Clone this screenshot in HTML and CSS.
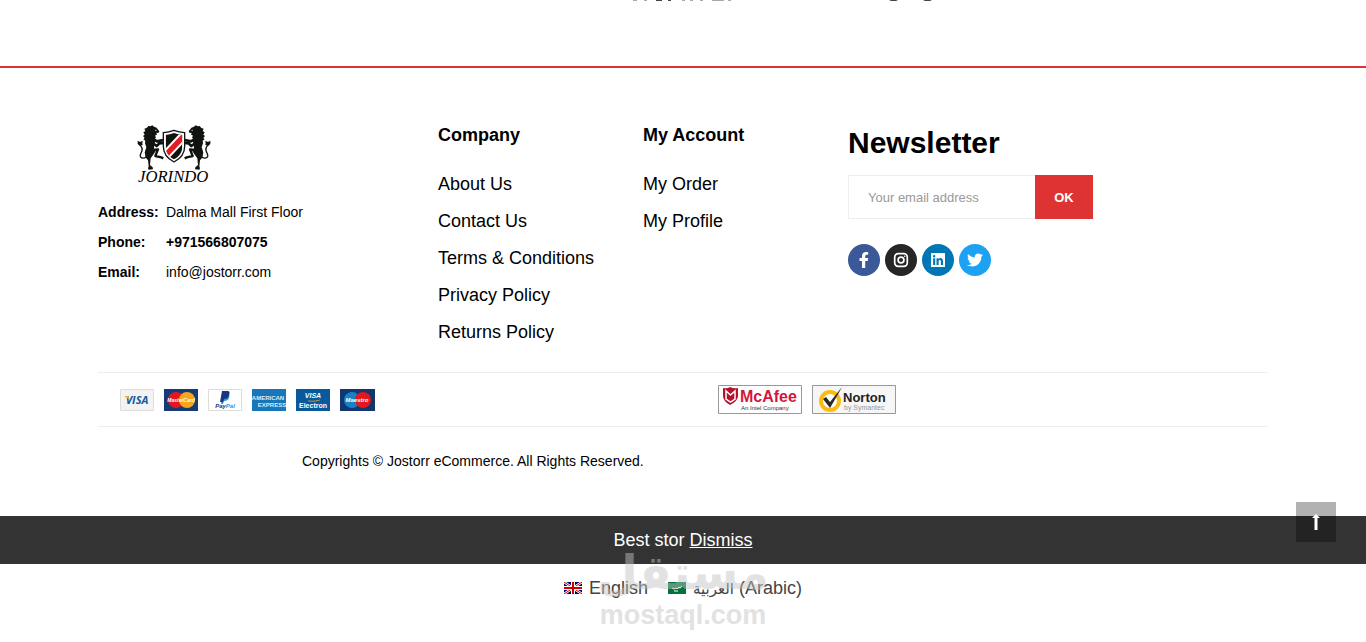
FILE: index.html
```html
<!DOCTYPE html>
<html lang="en">
<head>
    <meta charset="UTF-8">
    <meta name="viewport" content="width=device-width, initial-scale=1.0">
    <title>Jostorr</title>
    <link rel="stylesheet" href="styles.css">
</head>
<body>
    <section class="brands">
        <svg class="brand-one" width="100" height="2" viewBox="0 0 100 2" aria-hidden="true">
            <path fill="#aaa" d="M0 0h4v1H0zM11 0h3v1h-3zM49 0h3v1h-3zM57 0h3v1h-3zM67 0h3v1h-3zM79 0h12v1H79zM95 0h3v1h-3z"/>
            <path fill="#444" d="M23 0h6v1h-6zM35 0h3v1h-3z"/>
        </svg>
        <svg class="brand-two" width="44" height="2" viewBox="0 0 44 2" aria-hidden="true">
            <path fill="#444" d="M0 0h9l-2 1H2zM34 0h9l-2 1h-5z"/>
        </svg>
    </section>

    <footer class="footer">
        <div class="container">
            <div class="footer-top">
                <div class="footer-about">
                    <a href="#" class="logo" aria-label="Jorindo">
                        <svg width="76" height="62" viewBox="0 0 228 186">
                            <defs>
                                <g id="lion">
                                    <!-- mane, head and body -->
                                    <path fill="#11130e" d="M34 6l6 1 6-3 5 4 8 3 3 5 5 5-2 5-8 1 4 4-7 4 3 5-4 5 2 7-3 7-1 14-4 12-2 10-8 8-10-5-4-12 5-16-4-12 1-8-6-4 4-4-5-6 5-4-4-7 6-4-3-7 7-2z"/>
                                    <!-- fore legs -->
                                    <path fill="none" stroke="#11130e" stroke-width="8" stroke-linejoin="round" d="M44 42l16 10 18-4M45 56l14 10 8-8 12-1"/>
                                    <!-- hind legs -->
                                    <path fill="#11130e" d="M26 78l18-4 12 8-10 14-5 7-2 20 8 7 1 6-13 1-2-4 2-6-2-18-8-9z"/>
                                    <path fill="none" stroke="#11130e" stroke-width="7" stroke-linejoin="round" d="M46 78l17-2-8 20 18 4 6 3"/>
                                    <!-- tail -->
                                    <path fill="none" stroke="#11130e" stroke-width="4" d="M29 99c-16 8-23 0-17-12 5-9 5-12 2-17-3-6-8-6-8-13"/>
                                    <path fill="#11130e" d="M2 50l7 4 8-4-1 8 1 5-8 2-7-5z"/>
                                    <path fill="#fff" d="M54 17l6 2-4 2z"/>
                                </g>
                            </defs>
                            <use href="#lion"/>
                            <use href="#lion" transform="matrix(-1 0 0 1 222 0)"/>
                            <path fill="#fff" stroke="#11130e" stroke-width="4" d="M79 26q17-1 32-7 15 6 32 7v41c0 24-12 37-32 47-20-10-32-23-32-47z"/>
                            <clipPath id="shield"><path d="M86 33q13-1 25-6 12 5 25 6v33c0 20-9 31-25 40-16-9-25-20-25-40z"/></clipPath>
                            <g clip-path="url(#shield)">
                                <path fill="#11130e" d="M80 20h64v90H80z"/>
                                <path stroke="#fff" stroke-width="28" d="M75 105l72-76"/>
                                <path stroke="#e31b23" stroke-width="16" d="M75 105l72-76"/>
                            </g>
                            <text x="3" y="175" class="logo-text">JORINDO</text>
                        </svg>
                    </a>
                    <dl class="contact">
                        <dt>Address:</dt>
                        <dd>Dalma Mall First Floor</dd>
                        <dt>Phone:</dt>
                        <dd class="phone">+971566807075</dd>
                        <dt>Email:</dt>
                        <dd>info@jostorr.com</dd>
                    </dl>
                </div>

                <div class="footer-links">
                    <h3>Company</h3>
                    <ul>
                        <li><a href="#">About Us</a></li>
                        <li><a href="#">Contact Us</a></li>
                        <li><a href="#">Terms &amp; Conditions</a></li>
                        <li><a href="#">Privacy Policy</a></li>
                        <li><a href="#">Returns Policy</a></li>
                    </ul>
                </div>

                <div class="footer-links">
                    <h3>My Account</h3>
                    <ul>
                        <li><a href="#">My Order</a></li>
                        <li><a href="#">My Profile</a></li>
                    </ul>
                </div>

                <div class="newsletter">
                    <h2>Newsletter</h2>
                    <form class="newsletter-form">
                        <input type="email" aria-label="Your email address" placeholder="Your email address">
                        <button type="submit">OK</button>
                    </form>
                    <div class="social">
                        <a href="#" class="facebook" aria-label="Facebook">
                            <svg width="16" height="16" viewBox="0 0 16 16"><path fill="#fff" d="M6 16V9H3.500V6H6V4.200C6 1.500 7.500 0 10 0c1 0 2.200.2 2.200.2v2.500H11C9.600 2.700 9.200 3.500 9.200 4.400V6h3l-.5 3H9.200v7z"/></svg>
                        </a>
                        <a href="#" class="instagram" aria-label="Instagram">
                            <svg width="16" height="16" viewBox="0 0 16 16" fill="none" stroke="#fff"><rect x="1.700" y="1.700" width="12.600" height="12.600" rx="3.500" stroke-width="1.700"/><circle cx="8" cy="8" r="2.900" stroke-width="1.700"/><circle cx="11.700" cy="4.300" r=".8" fill="#fff" stroke="none"/></svg>
                        </a>
                        <a href="#" class="linkedin" aria-label="LinkedIn">
                            <svg width="16" height="16" viewBox="0 0 16 16"><path fill="#fff" fill-rule="evenodd" d="M1.500 1h13q.5 0 .5.500v13q0 .5-.5.500h-13q-.5 0-.5-.5v-13Q1 1 1.500 1zM3.100 6.300V13h2.100V6.300zM4.150 3a1.200 1.200 0 1 0 0 2.400 1.200 1.200 0 0 0 0-2.400zM6.500 6.300V13h2.100V9.700c0-2.200 2.300-2.200 2.300 0V13H13V9.200c0-3.500-3.300-3.800-4.500-2V6.300z"/></svg>
                        </a>
                        <a href="#" class="twitter" aria-label="Twitter">
                            <svg width="16" height="16" viewBox="0 0 512 512"><path fill="#fff" d="M459 152c0 4 .3 9 .3 14 0 138-105 298-298 298-59 0-114-17-161-47 8 1 16 1 25 1 49 0 94-16 130-45-46-1-85-31-98-73 7 1 13 2 20 2 9 0 19-1 28-4-48-10-84-52-84-103v-1c14 8 30 13 47 13-28-19-47-51-47-87 0-19 5-37 14-53 52 64 129 105 216 110-2-8-3-16-3-24 0-58 47-105 105-105 30 0 57 13 77 33 24-5 46-13 66-25-8 24-24 45-46 58 21-2 42-8 60-16-14 21-32 39-52 54z"/></svg>
                        </a>
                    </div>
                </div>
            </div>

            <div class="footer-middle">
                <div class="payments">
                    <svg width="34" height="22" viewBox="0 0 34 22" role="img" aria-label="Visa">
                        <path fill="#f3f3f3" stroke="#ddd" d="M.5.5h33v21H.5z"/>
                        <text x="17" y="15" class="card-text visa" fill="#12589c">VISA</text>
                        <path fill="#f5a623" d="M4 7h4l2 4z"/>
                    </svg>
                    <svg width="34" height="22" viewBox="0 0 34 22" role="img" aria-label="MasterCard">
                        <path fill="#163c78" d="M0 0h34v22H0z"/>
                        <circle cx="12" cy="11" r="8" fill="#e3171e"/>
                        <circle cx="23" cy="11" r="8" fill="#f9a51a"/>
                        <text x="17" y="13" class="card-text master" fill="#fff">MasterCard</text>
                    </svg>
                    <svg width="34" height="22" viewBox="0 0 34 22" role="img" aria-label="PayPal">
                        <path fill="#fff" stroke="#ddd" d="M.5.5h33v21H.5z"/>
                        <path fill="#2997d8" d="M15 5h6q1 1 0 4-1 3-5 3l-1 3h-2z"/>
                        <path fill="#173780" d="M14 2h5c3 0 3 2 2 4-1 3-2 4-5 4l-1 3h-3z"/>
                        <text x="17" y="19" class="card-text paypal" fill="#173780">Pay<tspan fill="#2997d8">Pal</tspan></text>
                    </svg>
                    <svg width="34" height="22" viewBox="0 0 34 22" role="img" aria-label="American Express">
                        <path fill="#1976b9" d="M0 0h34v22H0z"/>
                        <text x="16" y="11" class="card-text amex">AMERICAN</text>
                        <text x="20" y="18" class="card-text amex">EXPRESS</text>
                    </svg>
                    <svg width="34" height="22" viewBox="0 0 34 22" role="img" aria-label="Visa Electron">
                        <path fill="#085a9d" d="M0 0h34v22H0z"/>
                        <text x="17" y="9" class="card-text electron-visa" fill="#fff">VISA</text>
                        <path fill="none" stroke="#c98d45" d="M12 12q6 1 12-1"/>
                        <text x="17" y="19" class="card-text electron" fill="#fff">Electron</text>
                    </svg>
                    <svg width="35" height="22" viewBox="0 0 35 22" role="img" aria-label="Maestro">
                        <path fill="#12366f" d="M0 0h35v22H0z"/>
                        <circle cx="12" cy="11" r="8" fill="#1682c5"/>
                        <circle cx="23" cy="11" r="8" fill="#e3171e"/>
                        <text x="17" y="13" class="card-text maestro" fill="#fff">Maestro</text>
                    </svg>
                </div>
                <div class="seals">
                    <svg width="84" height="29" viewBox="0 0 84 29" role="img" aria-label="McAfee">
                        <path fill="#fff" stroke="#999" d="M.5.5h83v28H.5z"/>
                        <path fill="#b5122e" d="M5 3q4 1 7-1 4 2 8 1v8q0 5-8 9-7-4-7-9z"/>
                        <path fill="none" stroke="#fff" stroke-width="1.500" d="M8 14V6l4.500 4L17 6v8l-4.500 3z"/>
                        <text x="22" y="17" class="mcafee">McAfee</text>
                        <text x="23" y="25" class="seal-note">An Intel Company</text>
                    </svg>
                    <svg width="84" height="29" viewBox="0 0 84 29" role="img" aria-label="Norton">
                        <path fill="#f6f6f6" stroke="#999" d="M.5.5h83v28H.5z"/>
                        <circle cx="18" cy="16" r="9" fill="#fff" stroke="#fdbb11" stroke-width="4"/>
                        <path fill="#2a2a2a" d="M11 14l3-2 4 5L30 2l-5 9-7 12z"/>
                        <text x="31" y="17" class="norton">Norton</text>
                        <text x="32" y="25" class="seal-by">by Symantec</text>
                    </svg>
                </div>
            </div>

            <p class="copyright">Copyrights © Jostorr eCommerce. All Rights Reserved.</p>
        </div>
    </footer>

    <div class="notice">Best stor <a href="#">Dismiss</a></div>

    <nav class="languages">
        <a href="#">
            <svg width="18" height="12" viewBox="0 0 18 12" aria-hidden="true">
                <path fill="#006" d="M0 0h18v12H0z"/>
                <path stroke="#fff" stroke-width="2.500" d="M0 0l18 12M18 0L0 12"/>
                <path stroke="#c00" d="M0 0l18 12M18 0L0 12"/>
                <path stroke="#fff" stroke-width="4" d="M9 0v12M0 6h18"/>
                <path stroke="#c00" stroke-width="2" d="M9 0v12M0 6h18"/>
            </svg>
            English
        </a>
        <a href="#">
            <svg width="18" height="12" viewBox="0 0 18 12" aria-hidden="true">
                <path fill="#00733d" d="M0 0h18v12H0z"/>
                <path fill="none" stroke="#fff" d="M4 6l2 1 2-1 1 1 2-2 1 1 2-2M6 9h4"/>
            </svg>
            <span><span class="arabic" lang="ar">العربية</span> (Arabic)</span>
        </a>
    </nav>

    <div class="watermark" aria-hidden="true">
        <span class="watermark-ar" lang="ar">مستقل</span>
        <span>mostaql.com</span>
    </div>

    <button class="to-top" type="button" aria-label="Back to top">
        <svg width="8" height="16" viewBox="0 0 8 16"><path fill="#fff" d="M4 0l4 4H5.500v12h-3V4H0z"/></svg>
    </button>
</body>
</html>
```
FILE: styles.css
```css
* {
    box-sizing: border-box;
}

body {
    margin: 0;
    background-color: #fff;
    font-family: "Liberation Sans", Arial, sans-serif;
    font-size: 14px;
    line-height: 20px;
    color: #000;
}

a {
    color: inherit;
    text-decoration: none;
}

h2,
h3,
ul,
dl,
dd,
p {
    margin: 0;
    padding: 0;
}

svg {
    display: block;
    flex-shrink: 0;
}

.brands {
    display: flex;
    justify-content: center;
    gap: 156px;
    height: 68px;
    padding-left: 200px;
    border-bottom: 2px solid #dd3333;
}

.container {
    max-width: 1170px;
    margin: 0 auto;
}

.footer {
    padding-top: 56px;
}

.footer-top {
    display: grid;
    grid-template-columns: 340fr 205fr 205fr 420fr;
    padding-bottom: 29px;
    border-bottom: 1px solid #eee;
}

/* contact */
.logo {
    display: block;
    padding-left: 39px;
}

.logo-text {
    font-family: "Liberation Serif", serif;
    font-size: 50px;
    font-style: italic;
}

.contact {
    display: grid;
    grid-template-columns: 68px 1fr;
    padding-top: 11px;
    line-height: 30px;
}

.contact dt,
.contact .phone {
    font-weight: bold;
}

/* link columns */
.footer-links h3 {
    margin-bottom: 27px;
    font-size: 18px;
    line-height: 22px;
}

.footer-links ul {
    display: grid;
    gap: 15px;
    list-style: none;
    font-size: 18px;
    line-height: 22px;
}

/* newsletter */
.newsletter h2 {
    margin-bottom: 13px;
    font-size: 30px;
    line-height: 38px;
}

.newsletter-form {
    display: flex;
    height: 44px;
    margin-bottom: 25px;
}

.newsletter-form input {
    width: 187px;
    padding: 0 19px;
    border: 1px solid #eee;
    border-right: 0;
    background-color: #fff;
    font-family: inherit;
    font-size: 13px;
}

.newsletter-form input::placeholder {
    color: #999;
}

.newsletter-form button {
    width: 58px;
    border: 0;
    background-color: #dd3333;
    color: #fff;
    font-family: inherit;
    font-size: 13px;
    font-weight: bold;
    cursor: pointer;
}

.social {
    display: flex;
    gap: 5px;
}

.social a {
    display: flex;
    align-items: center;
    justify-content: center;
    width: 32px;
    height: 32px;
    border-radius: 50%;
}

.facebook {
    background-color: #3b5998;
}

.instagram {
    background-color: #262626;
}

.linkedin {
    background-color: #0077b5;
}

.twitter {
    background-color: #1da1f2;
}

/* payment methods and seals */
.footer-middle {
    display: grid;
    grid-template-columns: 620fr 550fr;
    align-items: center;
    padding: 12px 0;
    border-bottom: 1px solid #eee;
}

.payments {
    display: flex;
    gap: 10px;
    padding-left: 22px;
}

.seals {
    display: flex;
    gap: 10px;
}

.card-text {
    font-weight: bold;
    text-anchor: middle;
}

.visa {
    font-family: "Open Sans", sans-serif;
    font-size: 11px;
    font-style: italic;
}

.master {
    font-size: 5px;
    font-style: italic;
}

.paypal {
    font-size: 6px;
    font-style: italic;
}

.amex {
    fill: #d9edf9;
    font-size: 6px;
}

.electron-visa {
    font-size: 7px;
    font-style: italic;
}

.electron {
    font-size: 7px;
}

.maestro {
    font-size: 6px;
    font-style: italic;
}

.mcafee {
    fill: #d5163c;
    font-size: 16px;
    font-weight: bold;
}

.seal-note {
    fill: #333;
    font-size: 6px;
}

.norton {
    fill: #222;
    font-size: 13px;
    font-weight: bold;
}

.seal-by {
    fill: #999;
    font-size: 7px;
}

.copyright {
    padding: 24px 0 45px 204px;
}

/* bottom notice */
.notice {
    padding: 13px 0;
    background-color: #333;
    color: #fff;
    font-size: 18px;
    line-height: 22px;
    text-align: center;
}

.notice a {
    text-decoration: underline;
}

.languages {
    display: flex;
    justify-content: center;
    gap: 20px;
    padding: 13px 0;
    color: #444;
    font-size: 18px;
    line-height: 22px;
}

.languages a {
    display: flex;
    align-items: center;
    gap: 7px;
}

.arabic {
    font-family: "DejaVu Sans", sans-serif;
    font-size: 15px;
    line-height: 20px;
}

.watermark {
    position: absolute;
    top: 546px;
    left: 50%;
    display: grid;
    justify-items: center;
    transform: translateX(-50%);
    color: #c3c3c3;
    font-size: 27px;
    font-weight: bold;
    line-height: 30px;
    opacity: 0.47;
    pointer-events: none;
}

.watermark-ar {
    font-family: "DejaVu Sans", sans-serif;
    font-size: 47px;
    line-height: 54px;
}

.to-top {
    position: fixed;
    right: 30px;
    bottom: 100px;
    display: flex;
    align-items: center;
    justify-content: center;
    width: 40px;
    height: 40px;
    padding: 0;
    border: 0;
    background-color: rgba(0, 0, 0, 0.3);
    cursor: pointer;
}
```
